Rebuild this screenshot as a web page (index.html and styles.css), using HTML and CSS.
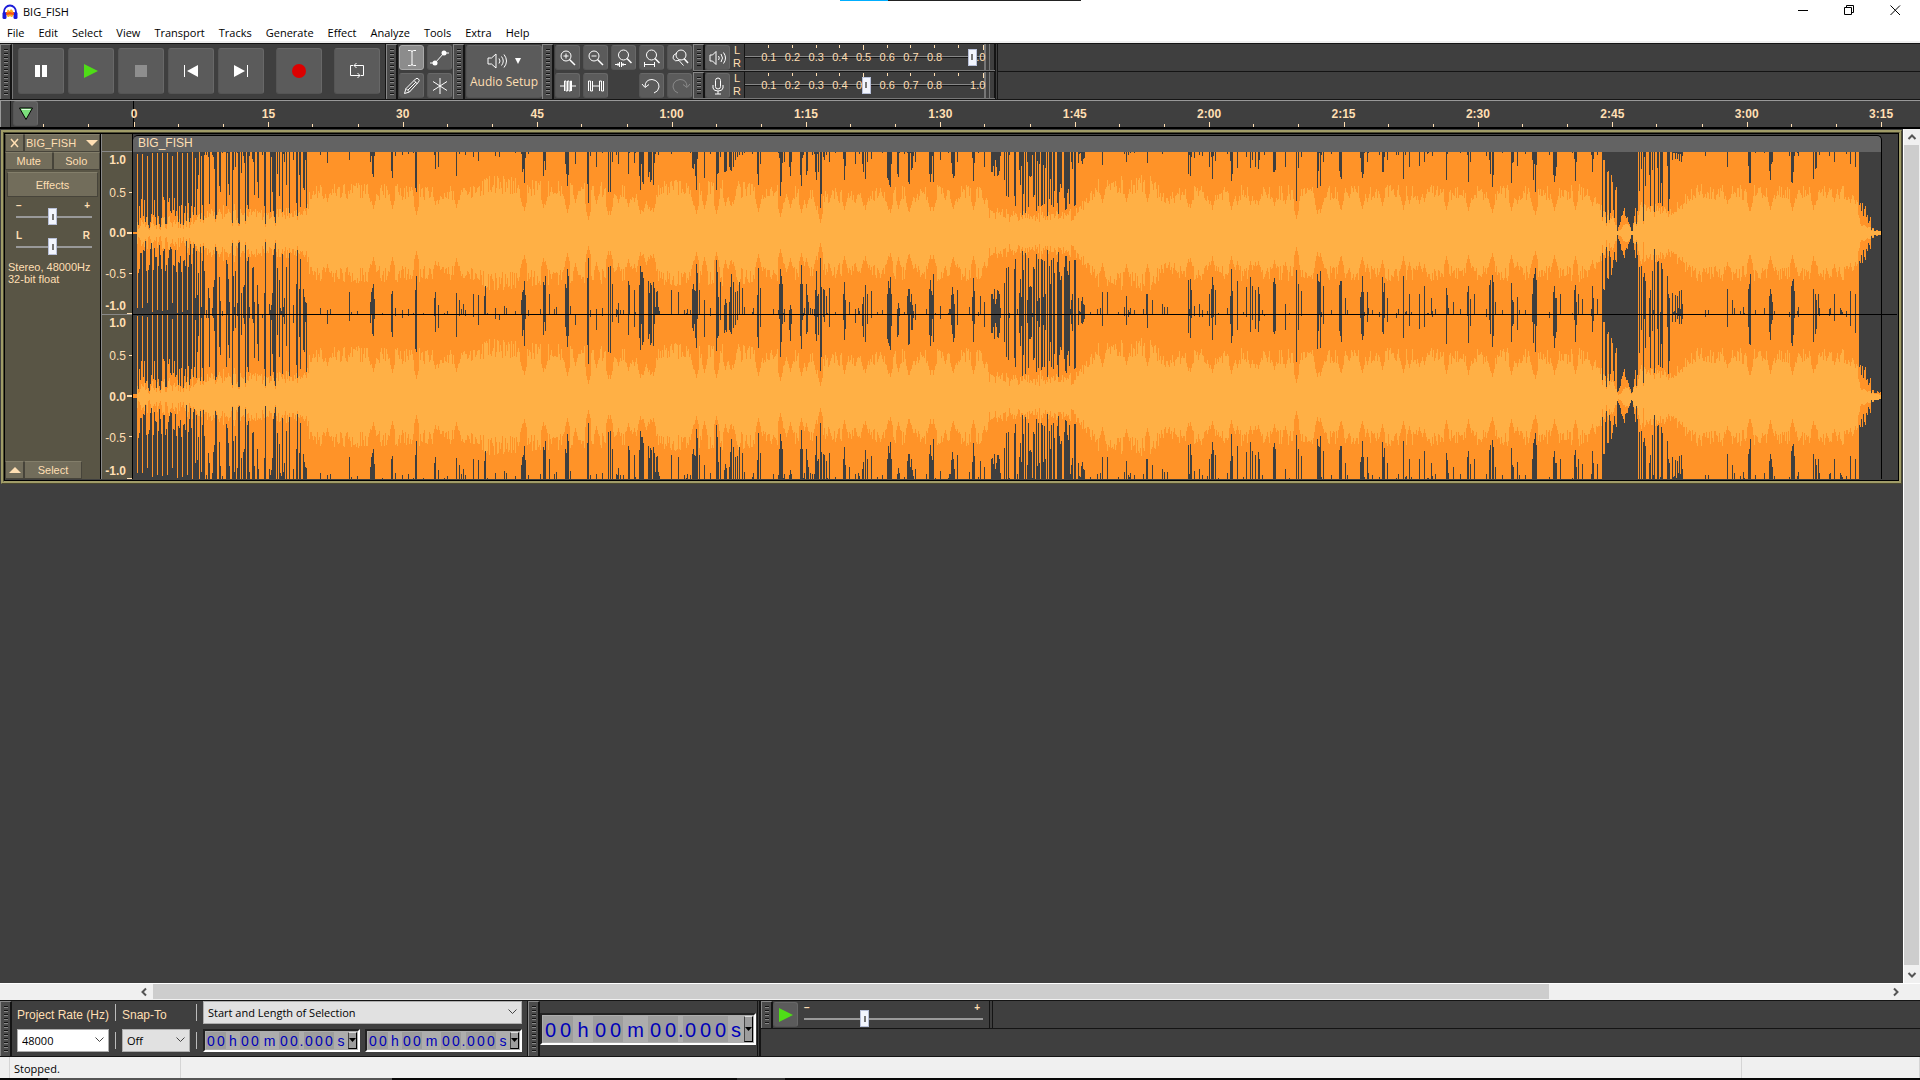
FILE: index.html
```html
<!DOCTYPE html>
<html lang="en">
<head>
    <meta charset="UTF-8">
    <meta name="viewport" content="width=device-width, initial-scale=1.0">
    <title>BIG_FISH</title>
    <link rel="stylesheet" href="styles.css">
</head>
<body>
    <div class="capture-bar"></div>

    <header class="titlebar">
        <svg class="logo" width="16" height="16" viewBox="0 0 16 16">
            <path d="M5 7 L6 5.500 L7.500 7 L9 5 L11 7 V12 L9.500 13 L8 12 L6.500 13 L5 12 Z" fill="#ffb020"/>
            <rect x="4" y="8" width="8" height="3" fill="#f4501c"/>
            <path d="M2 10 V8 A6 6.500 0 0 1 14 8 V10" fill="none" stroke="#1c1cd8" stroke-width="1.800"/>
            <rect x="0.500" y="8" width="4" height="7" rx="1.500" fill="#1c1cd8"/>
            <rect x="11.500" y="8" width="4" height="7" rx="1.500" fill="#1c1cd8"/>
            <path d="M5 7.500 L6.500 6 L8 8 L9.500 6 L11 7.500 V12 L9.500 13 L8 11.500 L6.500 13 L5 12 Z" fill="#ffb020"/>
            <path d="M4 9 L8 8 L12 9 V11 L8 10.500 L4 11 Z" fill="#f4501c"/>
        </svg>
        <span class="title">BIG_FISH</span>
        <button class="win-btn" aria-label="Minimize"><svg width="11" height="11"><path d="M0 5.500H10" stroke="#000"/></svg></button>
        <button class="win-btn" aria-label="Restore"><svg width="11" height="11"><path d="M.5 2.500H7.500V9.500H.5ZM2.500 2.500V.5H9.500V7.500H7.500" fill="none" stroke="#000"/></svg></button>
        <button class="win-btn" aria-label="Close"><svg width="11" height="11"><path d="M.5 .5L10 10M10 .5L.5 10" stroke="#000"/></svg></button>
    </header>

    <nav class="menubar">
        <a href="#">File</a><a href="#">Edit</a><a href="#">Select</a><a href="#">View</a><a href="#">Transport</a><a href="#">Tracks</a><a href="#">Generate</a><a href="#">Effect</a><a href="#">Analyze</a><a href="#">Tools</a><a href="#">Extra</a><a href="#">Help</a>
    </nav>

    <div class="dock">
        <div class="grip"></div>
        <div class="transport">
            <button class="btn big" aria-label="Pause"><svg width="14" height="14"><path d="M1 1H6V13H1ZM8 1H13V13H8Z" fill="#fff"/></svg></button>
            <button class="btn big" aria-label="Play"><svg width="14" height="14"><path d="M0 0L14 7L0 14Z" fill="#4fdc17"/></svg></button>
            <button class="btn big" aria-label="Stop"><svg width="14" height="14"><rect x="1" y="1" width="12" height="12" fill="#8e8e8e"/></svg></button>
            <button class="btn big" aria-label="Skip to start"><svg width="14" height="14"><path d="M.5 1V13" stroke="#fff"/><path d="M14 1V13L3 7Z" fill="#fff"/></svg></button>
            <button class="btn big" aria-label="Skip to end"><svg width="14" height="14"><path d="M13.500 1V13" stroke="#fff"/><path d="M0 1V13L11 7Z" fill="#fff"/></svg></button>
            <button class="btn big apart" aria-label="Record"><svg width="14" height="14"><circle cx="7" cy="7" r="7" fill="#dc0000"/></svg></button>
            <button class="btn big apart" aria-label="Loop"><svg width="16" height="16" fill="none" stroke="#fff"><path d="M4 2.500H1.500V12.500H11M8.500 10L11 12.500L8.500 15M12 12.500H14.500V2.500H5M7.500 0L5 2.500L7.500 5"/></svg></button>
        </div>
        <div class="grip"></div>
        <div class="tools">
            <button class="btn on" aria-label="Selection tool"><svg width="18" height="18" fill="none" stroke="#fff"><path d="M5 1.500H7.500Q9 1.500 9 3Q9 1.500 10.500 1.500H13M5 16.500H7.500Q9 16.500 9 15Q9 16.500 10.500 16.500H13M9 3V15"/></svg></button>
            <button class="btn" aria-label="Envelope tool"><svg width="20" height="18"><path d="M0 14H5L14 4H19" stroke="#fff" fill="none"/><circle cx="5" cy="14" r="2.500" fill="#fff"/><circle cx="14" cy="4" r="2.500" fill="#fff"/></svg></button>
            <button class="btn" aria-label="Draw tool"><svg width="18" height="18" fill="none" stroke="#fff"><path d="M1.500 16.500L3 11.500L12.500 2Q14 .5 15.500 2Q17 3.500 15.500 5L6.500 15ZM3 11.500L6.500 15M11 3.500L14.500 7M5 13L13 5"/></svg></button>
            <button class="btn" aria-label="Multi-tool"><svg width="18" height="18" stroke="#fff"><path d="M9 1V17M2 4.500L16 13.500M2 13.500L16 4.500"/></svg></button>
        </div>
        <div class="grip"></div>
        <button class="btn audio-setup">
            <span class="audio-icons">
                <svg width="22" height="18" fill="none" stroke="#fff"><path d="M1 6H4.500L9 2V16L4.500 12H1ZM12 6.500Q14 9 12 11.500M14.500 4.500Q18 9 14.500 13.500M17 2.500Q22 9 17 15.500"/></svg>
                <svg width="6" height="6"><path d="M0 0H6L3 6Z" fill="#fff"/></svg>
            </span>
            Audio Setup
        </button>
        <div class="grip"></div>
        <div class="edit-tools">
            <button class="btn" aria-label="Zoom in"><svg width="18" height="18" fill="none" stroke="#fff"><circle cx="7" cy="7" r="5"/><path d="M10.500 10.500L16 16" stroke-width="1.500"/><path d="M4.500 7H9.500M7 4.500V9.500"/></svg></button>
            <button class="btn" aria-label="Zoom out"><svg width="18" height="18" fill="none" stroke="#fff"><circle cx="7" cy="7" r="5"/><path d="M10.500 10.500L16 16" stroke-width="1.500"/><path d="M4.500 7H9.500"/></svg></button>
            <button class="btn" aria-label="Fit selection"><svg width="18" height="18" fill="none" stroke="#fff"><circle cx="8.500" cy="6" r="5"/><path d="M12 9.500L16.500 14" stroke-width="1.500"/><path d="M0 15.500H4.500M6.500 15.500H11M4.500 13V18M6.500 13V18M2.500 14L4 15.500L2.500 17M8.500 14L7 15.500L8.500 17"/></svg></button>
            <button class="btn" aria-label="Fit project"><svg width="18" height="18" fill="none" stroke="#fff"><circle cx="8.500" cy="6" r="5"/><path d="M12 9.500L16.500 14" stroke-width="1.500"/><path d="M1 15.500H11M1.500 13V18M11.500 13V18"/></svg></button>
            <button class="btn" aria-label="Zoom toggle"><svg width="18" height="18" fill="none" stroke="#fff"><circle cx="10" cy="6" r="5"/><path d="M13 9.500L17 14" stroke-width="1.500"/><path d="M6 4Q1 6 2 9.500Q4 13 8 11.500L12.500 16.500M8 11.500L9 10.500"/></svg></button>
            <button class="btn" aria-label="Trim"><svg width="18" height="18" fill="none" stroke="#fff"><path d="M1 9H5.500V4V14M5.500 4H7V14H8.500V4H10V14H11.500V4H12.500V14M12.500 9H17"/></svg></button>
            <button class="btn" aria-label="Silence"><svg width="18" height="18" fill="none" stroke="#fff"><path d="M1.500 14V4H3.500V14H5.500V4M5.500 9H12.500M12.500 14V4H14.500V14H16.500V4"/></svg></button>
            <span></span>
            <button class="btn" aria-label="Undo"><svg width="18" height="18" fill="none" stroke="#fff"><path d="M2 10Q2 2.500 9 2.500Q16 3.500 16 10Q15.500 14.500 11 16M-1 7L2 10.500L6 7.500"/></svg></button>
            <button class="btn" aria-label="Redo"><svg width="18" height="18" fill="none" stroke="#8a8a8a"><path d="M16 10Q16 2.500 9 2.500Q2 3.500 2 10Q2.500 14.500 7 16M12 7.500L16 10.500L19 7"/></svg></button>
        </div>
        <div class="meters">
            <div class="meter-row">
                <div class="grip"></div>
                <button class="btn" aria-label="Playback meter"><svg width="18" height="18" fill="none" stroke="#fff"><path d="M1 6H3.500L7 2.500V15.500L3.500 12H1ZM9.500 7Q11 9 9.500 11M12 5Q15 9 12 13M14.500 3.500Q18.500 9 14.500 14.500"/></svg></button>
                <div class="lr"><span>L</span><span>R</span></div>
                <div class="meter">
                    <div class="scale"><span>0.1</span><span>0.2</span><span>0.3</span><span>0.4</span><span class="long">0.5</span><span>0.6</span><span>0.7</span><span>0.8</span><span></span><span class="last">1.0</span></div>
                    <input type="range" min="0" max="1000" value="968" aria-label="Playback level">
                </div>
                <div class="resizer"></div>
            </div>
            <div class="meter-row">
                <div class="grip"></div>
                <button class="btn" aria-label="Recording meter"><svg width="18" height="18" fill="none" stroke="#fff"><rect x="6.500" y="1" width="5" height="11" rx="2.500"/><path d="M4 8V11Q4.500 14 9 14Q13.500 14 14 11V8M9 14V17M6 17H12"/></svg></button>
                <div class="lr"><span>L</span><span>R</span></div>
                <div class="meter">
                    <div class="scale"><span>0.1</span><span>0.2</span><span>0.3</span><span>0.4</span><span class="long">0.5</span><span>0.6</span><span>0.7</span><span>0.8</span><span></span><span class="last">1.0</span></div>
                    <input type="range" min="0" max="1000" value="508" aria-label="Recording level">
                </div>
                <div class="resizer"></div>
            </div>
        </div>
        <div class="dock-rest"><div></div><div></div></div>
    </div>

    <div class="timeline">
        <div class="timeline-grip"></div>
        <button class="btn" aria-label="Pin play head"><svg width="16" height="14"><path d="M1.500 1H14.500L8 12.500Z" fill="#7be07b" stroke="#000"/><path d="M3.500 2.500H12.500" stroke="#d8ffd8"/></svg></button>
        <div class="lead"></div>
        <div class="marks">
            <div><span>0</span></div><div><span>15</span></div><div><span>30</span></div><div><span>45</span></div><div><span>1:00</span></div><div><span>1:15</span></div><div><span>1:30</span></div><div><span>1:45</span></div><div><span>2:00</span></div><div><span>2:15</span></div><div><span>2:30</span></div><div><span>2:45</span></div><div><span>3:00</span></div><div class="end"><span>3:15</span></div>
        </div>
    </div>

    <main class="workspace">
        <div class="tracks">
            <section class="track">
                <div class="panel">
                    <div class="panel-row">
                        <button class="tbtn close" aria-label="Close track"><svg width="9" height="8"><path d="M1 0L8 8M8 0L1 8" stroke="#ffdfb3" stroke-width="1.500"/></svg></button>
                        <button class="tbtn name">BIG_FISH<svg width="12" height="6"><path d="M0 0H12L6 6Z" fill="#ffdfb3"/></svg></button>
                    </div>
                    <div class="panel-row">
                        <button class="tbtn">Mute</button>
                        <button class="tbtn">Solo</button>
                    </div>
                    <button class="tbtn effects">Effects</button>
                    <div class="knob"><div><span>−</span><span>+</span></div><input type="range" value="48" aria-label="Gain"></div>
                    <div class="knob"><div><span>L</span><span>R</span></div><input type="range" value="48" aria-label="Pan"></div>
                    <p class="format">Stereo, 48000Hz<br>32-bit float</p>
                    <div class="panel-row foot">
                        <button class="tbtn close" aria-label="Collapse"><svg width="12" height="6"><path d="M0 6H12L6 0Z" fill="#ffdfb3"/></svg></button>
                        <button class="tbtn select">Select</button>
                    </div>
                </div>
                <div class="vrulers">
                    <div class="vhead"></div>
                    <div class="vruler"><b>1.0</b><span>0.5</span><b>0.0</b><span>-0.5</span><b>-1.0</b></div>
                    <div class="vruler second"><b>1.0</b><span>0.5</span><b>0.0</b><span>-0.5</span><b>-1.0</b></div>
                </div>
                <div class="clip-area">
                    <div class="clip-head"><div>BIG_FISH</div></div>
                    <div class="wave"><canvas id="left"></canvas></div>
                    <div class="wave second"><canvas id="right"></canvas></div>
                </div>
            </section>
        </div>
        <div class="vscroll">
            <svg width="16" height="16" fill="none" stroke="#555" stroke-width="2"><path d="M4.500 10L8 6.500L11.500 10"/></svg>
            <div></div>
            <svg width="16" height="18" fill="none" stroke="#555" stroke-width="2"><path d="M4.500 8L8 11.500L11.500 8"/></svg>
        </div>
    </main>

    <div class="hscroll">
        <svg width="16" height="16" fill="none" stroke="#555" stroke-width="2"><path d="M9 4.500L5.500 8L9 11.500"/></svg>
        <div class="hbar"><div></div></div>
        <svg width="16" height="16" fill="none" stroke="#555" stroke-width="2"><path d="M7 4.500L10.500 8L7 11.500"/></svg>
    </div>

    <div class="dock bottom">
        <div class="grip"></div>
        <div class="selection-bar">
            <label class="field rate" for="rate">Project Rate (Hz)</label>
            <div class="sep"></div>
            <label class="field" for="snap">Snap-To</label>
            <div class="sep"></div>
            <div class="combo wide"><select aria-label="Selection mode"><option>Start and Length of Selection</option></select><svg width="9" height="6"><path d="M.5 .5L4.500 4.500L8.500 .5" fill="none" stroke="#444"/></svg></div>
            <div class="combo white"><select id="rate"><option>48000</option></select><svg width="9" height="6"><path d="M.5 .5L4.500 4.500L8.500 .5" fill="none" stroke="#444"/></svg></div>
            <div class="sep"></div>
            <div class="combo"><select id="snap"><option>Off</option></select><svg width="9" height="6"><path d="M.5 .5L4.500 4.500L8.500 .5" fill="none" stroke="#444"/></svg></div>
            <div class="sep"></div>
            <div class="times">
                <div class="time"><i>0</i><i>0</i><span>h</span><i>0</i><i>0</i><span class="m">m</span><i>0</i><i>0</i><span class="dot">.</span><i>0</i><i>0</i><i>0</i><span class="s">s</span><button aria-label="Start format"><svg width="7" height="4"><path d="M0 0H7L3.500 4Z"/></svg></button></div>
                <div class="time"><i>0</i><i>0</i><span>h</span><i>0</i><i>0</i><span class="m">m</span><i>0</i><i>0</i><span class="dot">.</span><i>0</i><i>0</i><i>0</i><span class="s">s</span><button aria-label="Length format"><svg width="7" height="4"><path d="M0 0H7L3.500 4Z"/></svg></button></div>
            </div>
        </div>
        <div class="grip"></div>
        <div class="time-bar">
            <div class="time large"><i>0</i><i>0</i><span>h</span><i>0</i><i>0</i><span class="m">m</span><i>0</i><i>0</i><span class="dot">.</span><i>0</i><i>0</i><i>0</i><span class="s">s</span><button aria-label="Time format"><svg width="7" height="4"><path d="M0 0H7L3.500 4Z"/></svg></button></div>
        </div>
        <div class="speed-bar">
            <div class="speed-row">
                <div class="grip"></div>
                <button class="btn" aria-label="Play at speed"><svg width="14" height="14"><path d="M0 0L14 7L0 14Z" fill="#4fdc17"/></svg></button>
                <div class="knob speed"><div><span>−</span><span>+</span></div><input type="range" value="33" aria-label="Playback speed"></div>
                <div class="resizer"></div>
            </div>
            <div></div>
        </div>
    </div>

    <footer class="statusbar"><span class="tiny"></span><span class="state">Stopped.</span><span class="info"></span><span class="rest"></span></footer>
    <div class="taskbar"></div>

    <script src="wave.js"></script>
</body>
</html>
```
FILE: styles.css
```css
* { box-sizing: border-box; }
body { margin: 0; height: 100vh; display: flex; flex-direction: column; overflow: hidden; background: #3f3f3f; color: #ffdfb3; font: 12px "Liberation Sans", Arial, sans-serif; }
button, select, input { font: inherit; color: inherit; margin: 0; padding: 0; }
button { border: 0; background: none; display: flex; align-items: center; justify-content: center; }
svg { display: block; flex: none; overflow: visible; }

/* window frame */
.capture-bar { position: absolute; top: 0; left: 840px; width: 241px; height: 1px; background: linear-gradient(90deg, #00aeff 48px, #222 48px); }
.titlebar { height: 23px; flex: none; display: flex; align-items: center; padding-right: 2px; background: #fff; color: #000; font: 11px "Open Sans", sans-serif; }
.logo { margin: 0 5px 0 2px; }
.title { flex: 1; }
.win-btn { width: 46px; height: 20px; margin-bottom: 3px; }
.menubar { height: 20px; flex: none; display: flex; gap: 14px; padding: 0 7px; background: #fff; border-bottom: 2px solid #f0f0f0; font: 11px/20px "Open Sans", sans-serif; }
.menubar a { color: #000; text-decoration: none; }

/* toolbars */
.dock { height: 57px; flex: none; display: flex; border-top: 1px solid #141414; border-bottom: 1px solid #141414; }
.grip { width: 12px; flex: none; border-left: 1px solid #888; border-right: 2px solid #141414; border-top: 1px solid #888; background: repeating-linear-gradient(#141414 0 1px, #888 1px 2px, #4b4b4b 2px 4px) 3px 4px / 4px calc(100% - 8px) no-repeat #4b4b4b; }
.btn { width: 25px; height: 25px; flex: none; border-radius: 3px; background: #5b5b5b; border: 1px solid #686868; border-left-color: #555; border-bottom-color: #555; }
.btn.on { background: #8c8c8c; border-color: #aaa; }
.btn.big { width: 46px; height: 46px; }
.transport { display: flex; align-items: center; gap: 4px; padding: 0 5px 1px; border-left: 1px solid #777; border-right: 1px solid #141414; }
.transport .apart { margin-left: 8px; }
.tools { display: grid; grid-template-columns: 25px 25px; grid-template-rows: 25px 25px; gap: 3px; padding: 1px; }
.audio-setup { width: 76px; height: 53px; margin: 1px 0 1px 1px; flex-direction: column; gap: 4px; padding-bottom: 3px; font: 12px/15px "Open Sans", sans-serif; }
.audio-icons { display: flex; align-items: center; gap: 6px; }
.edit-tools { display: grid; grid-template-columns: repeat(5, 25px); grid-template-rows: 25px 25px; gap: 3px; padding: 1px; }
.meters { display: flex; flex-direction: column; width: 302px; flex: none; }
.meter-row { height: 27px; display: flex; border-bottom: 1px solid #777; }
.meter-row + .meter-row { border-top: 1px solid #141414; height: 28px; }
.meter-row .btn { margin-top: 1px; }
.lr { width: 14px; display: flex; flex-direction: column; align-items: center; font-size: 11px; line-height: 13px; }
.meter { flex: 1; display: grid; border-left: 1px solid #141414; border-right: 2px solid #777; background: linear-gradient(#888 0 1px, #141414 1px 2px) 0 12px / 100% 2px no-repeat; }
.meter > * { grid-area: 1 / 1; min-width: 0; }
.scale { display: flex; padding-left: 12px; font-size: 11px; line-height: 26px; text-align: center; }
.scale span { width: 24px; background: linear-gradient(#ffdfb3, #ffdfb3) 50% 1px / 1px 3px no-repeat; }
.scale .long { background-size: 1px 5px; }
.scale .last { width: 14px; background-position: 100% 1px; background-size: 1px 5px; text-align: right; }
.resizer { width: 9px; border-right: 1px solid #141414; background: linear-gradient(#777, #777) 3px 0 / 1px 100% no-repeat; }
.dock-rest { flex: 1; border-left: 3px double #141414; display: grid; grid-template-rows: 28px 1fr; }
.dock-rest div:first-child { border-bottom: 1px solid #141414; }

input[type=range] { appearance: none; background: none; height: 17px; align-self: center; width: 100%; }
input[type=range]::-webkit-slider-thumb { appearance: none; width: 9px; height: 17px; border: 1px solid #b8c0d8; background: linear-gradient(#777, #777) center / 2px 6px no-repeat #f2f5fd; }

/* time ruler */
.timeline { height: 29px; flex: none; display: flex; border-top: 1px solid #999; border-bottom: 2px solid #000; padding-right: 39px; }
.timeline-grip { width: 11px; border-left: 1px solid #999; border-right: 1px solid #141414; background: #4b4b4b; }
.timeline .btn { margin: 0 0 0 2px; }
.lead { width: 95px; background: linear-gradient(#ffdfb3, #ffdfb3) 5px 100% / 1px 3px no-repeat, linear-gradient(#ffdfb3, #ffdfb3) 50px 100% / 1px 3px no-repeat; }
.marks { flex: 1; display: flex; font-weight: bold; border-left: 1px solid #000; margin-right: -1px; }
.marks div { flex: 1; min-width: 0; background: linear-gradient(#ffdfb3, #ffdfb3) 0 100% / 1px 5px no-repeat, linear-gradient(#ffdfb3, #ffdfb3) 33% 100% / 1px 3px no-repeat, linear-gradient(#ffdfb3, #ffdfb3) 67% 100% / 1px 3px no-repeat; }
.marks .end { flex: 0 0 1px; background: linear-gradient(#ffdfb3, #ffdfb3) 0 100% / 1px 5px no-repeat; }
.marks span { display: block; width: 40px; margin-left: -20px; text-align: center; line-height: 26px; }

/* tracks */
.workspace { flex: 1; min-height: 0; display: flex; }
.tracks { flex: 1; min-width: 0; padding: 1px; }
.track { display: flex; border: 3px ridge #a09c68; background: #3f3f3f; box-shadow: inset 0 0 0 1px #000; padding: 1px 2px 2px 1px; }
.panel { width: 96px; flex: none; display: flex; flex-direction: column; background: #595545; border-right: 1px solid #000; }
.panel-row { display: flex; height: 18px; }
.tbtn { flex: 1; background: #726d5b; border: 1px solid #47443a; border-top-color: #837e6a; font-size: 11px; }
.tbtn.close { flex: 0 0 19px; }
.tbtn.name { justify-content: space-between; padding: 0 1px; }
.tbtn.effects { flex: none; height: 25px; margin: 2px 2px 4px; }
.tbtn.select { flex: 0 0 58px; }
.knob { margin: 0 3px 0 11px; width: 76px; height: 30px; font: bold 10px/10px "Liberation Sans", Arial, sans-serif; }
.knob div { display: flex; justify-content: space-between; padding: 0 2px 0 0; }
.knob input { display: block; margin-top: -3px; background: linear-gradient(#999, #999) center / 100% 2px no-repeat; }
.format { margin: 0 3px; font-size: 11px; line-height: 12px; }
.foot { margin-top: auto; }
.vrulers { width: 31px; flex: none; background: #595545; border-left: 1px solid #888; }
.vhead { height: 18px; border-bottom: 1px solid #888; }
.vruler { height: 162px; display: grid; grid-template-rows: 20px 41px 40px 41px 20px; align-items: center; justify-items: end; padding-right: 6px; background: linear-gradient(#ffdfb3, #ffdfb3) 100% 40px / 3px 1px no-repeat, linear-gradient(#ffdfb3, #ffdfb3) 100% 80px / 5px 2px no-repeat, linear-gradient(#ffdfb3, #ffdfb3) 100% 121px / 3px 1px no-repeat, linear-gradient(#ffdfb3, #ffdfb3) 100% 100% / 5px 1px no-repeat; }
.vruler :first-child { align-self: start; margin-top: 1px; }
.vruler :last-child { align-self: end; margin-bottom: 1px; }
.vruler.second { height: 165px; border-top: 1px solid #888; grid-template-rows: 20px 42px 40px 42px 20px; }
.clip-area { flex: 1; min-width: 0; border-left: 1px solid #000; padding-right: 0; }
.clip-head { height: 18px; padding: 1px 15px 0 0; }
.clip-head div { height: 17px; background: #636363; border: 1px solid #000; border-width: 1px 1px 0 0; border-radius: 5px 5px 0 0; padding-left: 5px; font-size: 12px; line-height: 15px; }
.wave { height: 162px; padding-right: 15px; }
.wave.second { height: 165px; border-top: 1px solid #000; }
.wave canvas { display: block; width: 100%; height: 100%; border-right: 1px solid #000; }

/* scroll bars */
.vscroll { width: 17px; display: flex; flex-direction: column; background: #f0f0f0; border-left: 1px solid #fff; }
.vscroll div { flex: 1; background: #cdcdcd; margin-right: 1px; }
.hscroll { height: 17px; flex: none; display: flex; background: #f0f0f0; border-top: 1px solid #fff; padding: 0 17px 0 137px; }
.hbar { flex: 1; padding-right: 338px; }
.hbar div { height: 15px; background: #cdcdcd; }

/* bottom toolbars */
.selection-bar { display: grid; grid-template-columns: 92px 13px 68px 13px auto; grid-template-rows: 22px 22px; row-gap: 6px; align-items: center; padding: 0 5px 5px; border-right: 1px solid #141414; }
.field { white-space: nowrap; padding-top: 6px; }
.sep { width: 1px; height: 17px; margin-left: 6px; background: #bbb; }
.combo { display: grid; align-items: center; height: 23px; background: #e1e1e1; border: 1px solid #adadad; color: #000; }
.combo > * { grid-area: 1 / 1; }
.combo svg { justify-self: end; margin-right: 4px; pointer-events: none; }
.combo select { appearance: none; width: 100%; height: 100%; border: 0; background: none; padding: 0 4px; font: 11px "Open Sans", sans-serif; }
.combo.white { background: #fff; }
.times { display: flex; gap: 5px; }
.time { display: flex; align-items: stretch; width: 157px; height: 23px; padding: 1px; background: #adadad; border: 2px inset #e8e8e8; border-color: #777 #fff #fff #777; color: #0000b8; font-size: 14px; line-height: 18px; text-align: center; }
.time i { width: 10px; font-style: normal; background: #9d9d9d; }
.time span { width: 14px; }
.time .m { width: 19px; }
.time .dot { width: 5px; }
.time .s { flex: 1; }
.time button { width: 9px; border: 1px solid #000; border-color: #ddd #000 #000 #444; background: #9d9d9d; }
.time-bar { display: flex; align-items: center; padding: 0 1px 0 0; border-right: 1px solid #141414; }
.time.large { width: 216px; height: 32px; font-size: 20px; line-height: 28px; }
.large i { width: 15px; }
.large span { width: 20px; }
.large .m { width: 25px; }
.speed-bar { flex: 1; display: grid; grid-template-rows: 28px 1fr; margin-left: 1px; border-left: 2px solid #141414; }
.speed-row { display: flex; border-bottom: 1px solid #141414; }
.speed-row .btn { margin: 1px 0 0; }
.knob.speed { width: 179px; margin: 2px 0 0 6px; }
.knob.speed div { padding-right: 3px; }
.knob.speed input { margin-top: -3px; }
.speed-row .resizer { border-left: 1px solid #141414; margin-left: 6px; width: 4px; background: none; }

.statusbar { height: 21px; flex: none; display: flex; background: #f0f0f0; color: #000; font: 11px/24px "Open Sans", sans-serif; }
.statusbar span { border-right: 1px solid #d5d5d5; }
.tiny { width: 10px; }
.state { width: 171px; padding-left: 4px; }
.info { flex: 1; }
.rest { width: 178px; }
.taskbar { height: 2px; flex: none; background: linear-gradient(90deg, transparent 48px, #555 48px 392px, transparent 392px 737px, #333 737px 785px, transparent 785px) #080808; }
```
FILE: wave.js
```js
// clip is 1748 units long, every quiet gap is [position, gap at top, gap at bottom]
const LENGTH = 1748;
const gaps = [
    [194, 11, 4], [197, 0, 5], [216, 8, 22], [237, 10, 12], [238, 4, 22], [240, 25, 30], [259, 26, 23], [282, 15, 20], [283, 40, 38],
    [302, 17, 22], [305, 15, 9], [323, 24, 21], [326, 2, 14], [330, 0, 10], [340, 5, 20], [345, 9, 19], [351, 0, 18], [352, 0, 29], [366, 5, 0], [371, 0, 8],
    [389, 20, 22], [391, 31, 33], [410, 24, 32], [412, 18, 38], [416, 0, 20], [432, 12, 30], [434, 34, 45], [437, 0, 8], [442, 12, 0], [454, 32, 36], [455, 51, 56], [463, 15, 5],
    [475, 40, 47], [477, 40, 48], [479, 10, 30], [485, 12, 11], [495, 22, 33], [501, 11, 24], [507, 38, 48], [509, 30, 42], [510, 32, 36], [515, 25, 33], [517, 30, 31], [518, 28, 29], [520, 33, 32], [523, 0, 22], [524, 0, 23],
    [538, 2, 24], [545, 0, 22], [560, 17, 30], [563, 38, 50], [566, 0, 24], [571, 26, 14], [583, 38, 54], [584, 22, 42], [587, 5, 32], [592, 20, 15], [597, 18, 26], [598, 19, 40], [600, 15, 32], [602, 8, 22], [604, 5, 23], [606, 3, 33], [609, 3, 26],
    [625, 33, 46], [627, 12, 26], [647, 44, 45], [648, 30, 38], [651, 10, 5], [657, 24, 9], [668, 34, 49], [673, 23, 30], [675, 0, 12], [683, 28, 43], [685, 20, 20], [687, 56, 56], [690, 5, 25], [691, 8, 24], [693, 3, 18], [696, 10, 26],
    [711, 28, 32], [716, 0, 12], [722, 12, 5], [730, 20, 17], [732, 27, 29], [734, 10, 20], [738, 7, 23], [755, 28, 33], [757, 35, 37], [765, 25, 11], [775, 30, 25], [776, 32, 25], [778, 18, 20], [782, 10, 10],
    [797, 30, 34], [800, 30, 40], [807, 8, 8], [819, 22, 27], [820, 26, 20], [824, 10, 24], [840, 29, 36], [847, 0, 18], [851, 15, 12],
    [969, 13, 22], [974, 0, 22], [993, 10, 18], [1013, 0, 20], [1014, 11, 20], [1019, 0, 14], [1029, 2, 10], [1055, 22, 34], [1057, 24, 35], [1061, 6, 8], [1066, 3, 10],
    [1076, 15, 20], [1079, 27, 37], [1082, 9, 24], [1098, 29, 45], [1104, 16, 33], [1113, 5, 27], [1117, 16, 37], [1119, 8, 28], [1122, 15, 24], [1125, 17, 27], [1141, 20, 36],
    [1152, 15, 10], [1163, 49, 44], [1165, 16, 30], [1168, 5, 23], [1184, 36, 40], [1187, 34, 43], [1190, 10, 28], [1207, 25, 33], [1208, 27, 33], [1212, 0, 16], [1228, 20, 22], [1229, 26, 38], [1234, 10, 22],
    [1249, 20, 37], [1251, 5, 31], [1254, 8, 16], [1270, 27, 38], [1276, 15, 20], [1286, 14, 20], [1291, 10, 28], [1298, 0, 16], [1313, 28, 26], [1320, 0, 12],
    [1335, 30, 28], [1337, 10, 15], [1341, 0, 20], [1357, 22, 34], [1359, 35, 39], [1362, 0, 12], [1378, 31, 31], [1380, 10, 12], [1384, 14, 17], [1400, 28, 36], [1402, 40, 46],
    [1421, 30, 28], [1423, 15, 16], [1427, 0, 20], [1442, 29, 29], [1445, 0, 20], [1449, 0, 15], [1459, 20, 28], [1464, 3, 15],
    [1572, 4, 4], [1594, 15, 25], [1599, 0, 14], [1616, 31, 30], [1617, 31, 40], [1637, 28, 25], [1639, 10, 12], [1659, 31, 33], [1660, 20, 35], [1680, 27, 25], [1682, 17, 20], [1685, 0, 20], [1701, 10, 20], [1717, 12, 23], [1722, 15, 20]
];

// average level along the clip
const level = [
    [0, 0], [4, 0.16], [60, 0.2], [85, 0.28], [170, 0.27], [176, 0.52], [340, 0.5], [355, 0.6], [500, 0.5], [560, 0.58], [690, 0.46], [850, 0.52],
    [856, 0.27], [944, 0.25], [962, 0.56], [1015, 0.62], [1035, 0.4], [1050, 0.5], [1460, 0.5], [1470, 0.28], [1478, 0.22], [1485, 0.03],
    [1494, 0.12], [1504, 0.15], [1508, 0.36], [1538, 0.25], [1560, 0.5], [1722, 0.5], [1727, 0.1], [1738, 0.06], [1748, 0.02]
];

function levelAt(t) {
    for (let i = 1; i < level.length; i++) {
        if (t <= level[i][0]) {
            const [a, va] = level[i - 1];
            const [b, vb] = level[i];
            return va + (vb - va) * (t - a) / (b - a);
        }
    }
    return 0;
}

function drawWave(id, seed) {
    let state = 77;
    const rand = () => {
        state = (state * 1664525 + 1013904223) % 4294967296;
        return state / 4294967296;
    };
    const canvas = document.getElementById(id);
    const w = canvas.width = canvas.clientWidth;
    const h = canvas.height = canvas.clientHeight;
    const ctx = canvas.getContext('2d');
    const mid = h / 2;

    for (let x = 0; x < w; x++) {
        const t = Math.floor(x * LENGTH / w);
        const r = rand(), r2 = rand(), r3 = rand(), r4 = rand();
        let top = r4 < 0.06 ? r * 4 : 0;
        let bottom = r4 < 0.12 ? r2 * 7 : 0;
        let rms = levelAt(t) * (0.8 + 0.4 * r3);
        let reach = 0.75;

        if (t < 4) {
            top = bottom = mid - 1;
        } else if (t < 62) {
            // sparse hits over a quiet floor
            reach = 0.5;
            rms *= 0.4 + r;
            if ((t - 4) % 5 === 0 || r < t / 600) {
                top = r2 * 4;
                bottom = r2 * 12;
            } else {
                top = mid * (0.55 + 0.4 * r2);
                bottom = mid * (0.5 + 0.42 * r3);
            }
        } else if (t < 176) {
            rms *= 0.7 + 0.4 * r2;
            if (r < 0.55) {
                top = mid * 0.75 * r2 * r2;
                bottom = mid * 0.65 * r3;
            }
            if (r4 > 0.93 - (t < 75 ? 0.3 : 0)) top = bottom = mid * (0.65 + 0.25 * r2);
        } else if (t > 855 && t < 945) {
            const open = t < 867 ? 0.4 : 1;
            rms *= 0.6 + 0.5 * r2;
            if (r < 0.62) {
                top = mid * (0.1 + 0.7 * r2) * open;
                bottom = mid * (0.15 + 0.65 * r2) * open;
            }
        } else if (t >= 945 && t < 952) {
            top = r * 14;
            bottom = r * 20;
        } else if (t >= 1469 && t < 1484) {
            const p = (t - 1469) / 15;
            const low = t % 4 < 2;
            top = mid * Math.min(0.95, low ? 0.7 + 0.2 * r : p * 0.45 + 0.1 * r);
            bottom = mid * Math.min(0.95, low ? 0.65 + 0.2 * r : p * 0.45 + 0.2 + 0.1 * r);
        } else if (t >= 1484 && t < 1505) {
            const bump = Math.max(0, 1 - Math.abs(t - 1491) / 7) * 0.3 + (t > 1499 ? r * 0.5 : 0);
            top = bottom = mid * (0.97 - bump * (0.7 + 0.4 * r2));
        } else if (t >= 1505 && t < 1540) {
            if (r < 0.55) {
                top = mid * r2 * 0.85;
                bottom = mid * r3 * 0.85;
            }
        } else if (t >= 1540 && t < 1550) {
            top = r * 10;
            bottom = r * 25;
        } else if (t > 1725) {
            const p = (t - 1725) / 23;
            top = bottom = mid * Math.min(0.97, 0.5 + p * 0.5 + r * 0.2);
        }

        if ((t > 176 && t < 855) || (t > 952 && t < 1469) || (t > 1550 && t <= 1725)) {
            for (const [pos, a, b] of gaps) {
                const d = Math.abs(t - pos);
                if (d === 0) {
                    top = a + (id === 'right' && a ? r * 6 - 3 : 0);
                    bottom = b;
                }
                // deep gaps are wider than one column
                if (d === 1 && a > 16 && r < 0.7) {
                    top = Math.max(top, a * r2);
                    bottom = Math.max(bottom, b * (0.4 + 0.5 * r3));
                }
                if (d < 3 && a > 9) rms = Math.min(rms, (0.44 - a / 180) + d * 0.05);
            }
        }
        if (seed) top = Math.max(0, top - r3 * 3);

        ctx.fillStyle = '#ff9328';
        ctx.fillRect(x, Math.round(top), 1, Math.round(h - bottom) - Math.round(top));
        const half = Math.max(1, Math.round(Math.min(rms * mid, (mid - top) * reach)));
        ctx.fillStyle = '#ffb045';
        if (t >= 4) ctx.fillRect(x, Math.round(mid) - half, 1, half * 2);
    }
}

drawWave('left', 0);
drawWave('right', 1);
```
